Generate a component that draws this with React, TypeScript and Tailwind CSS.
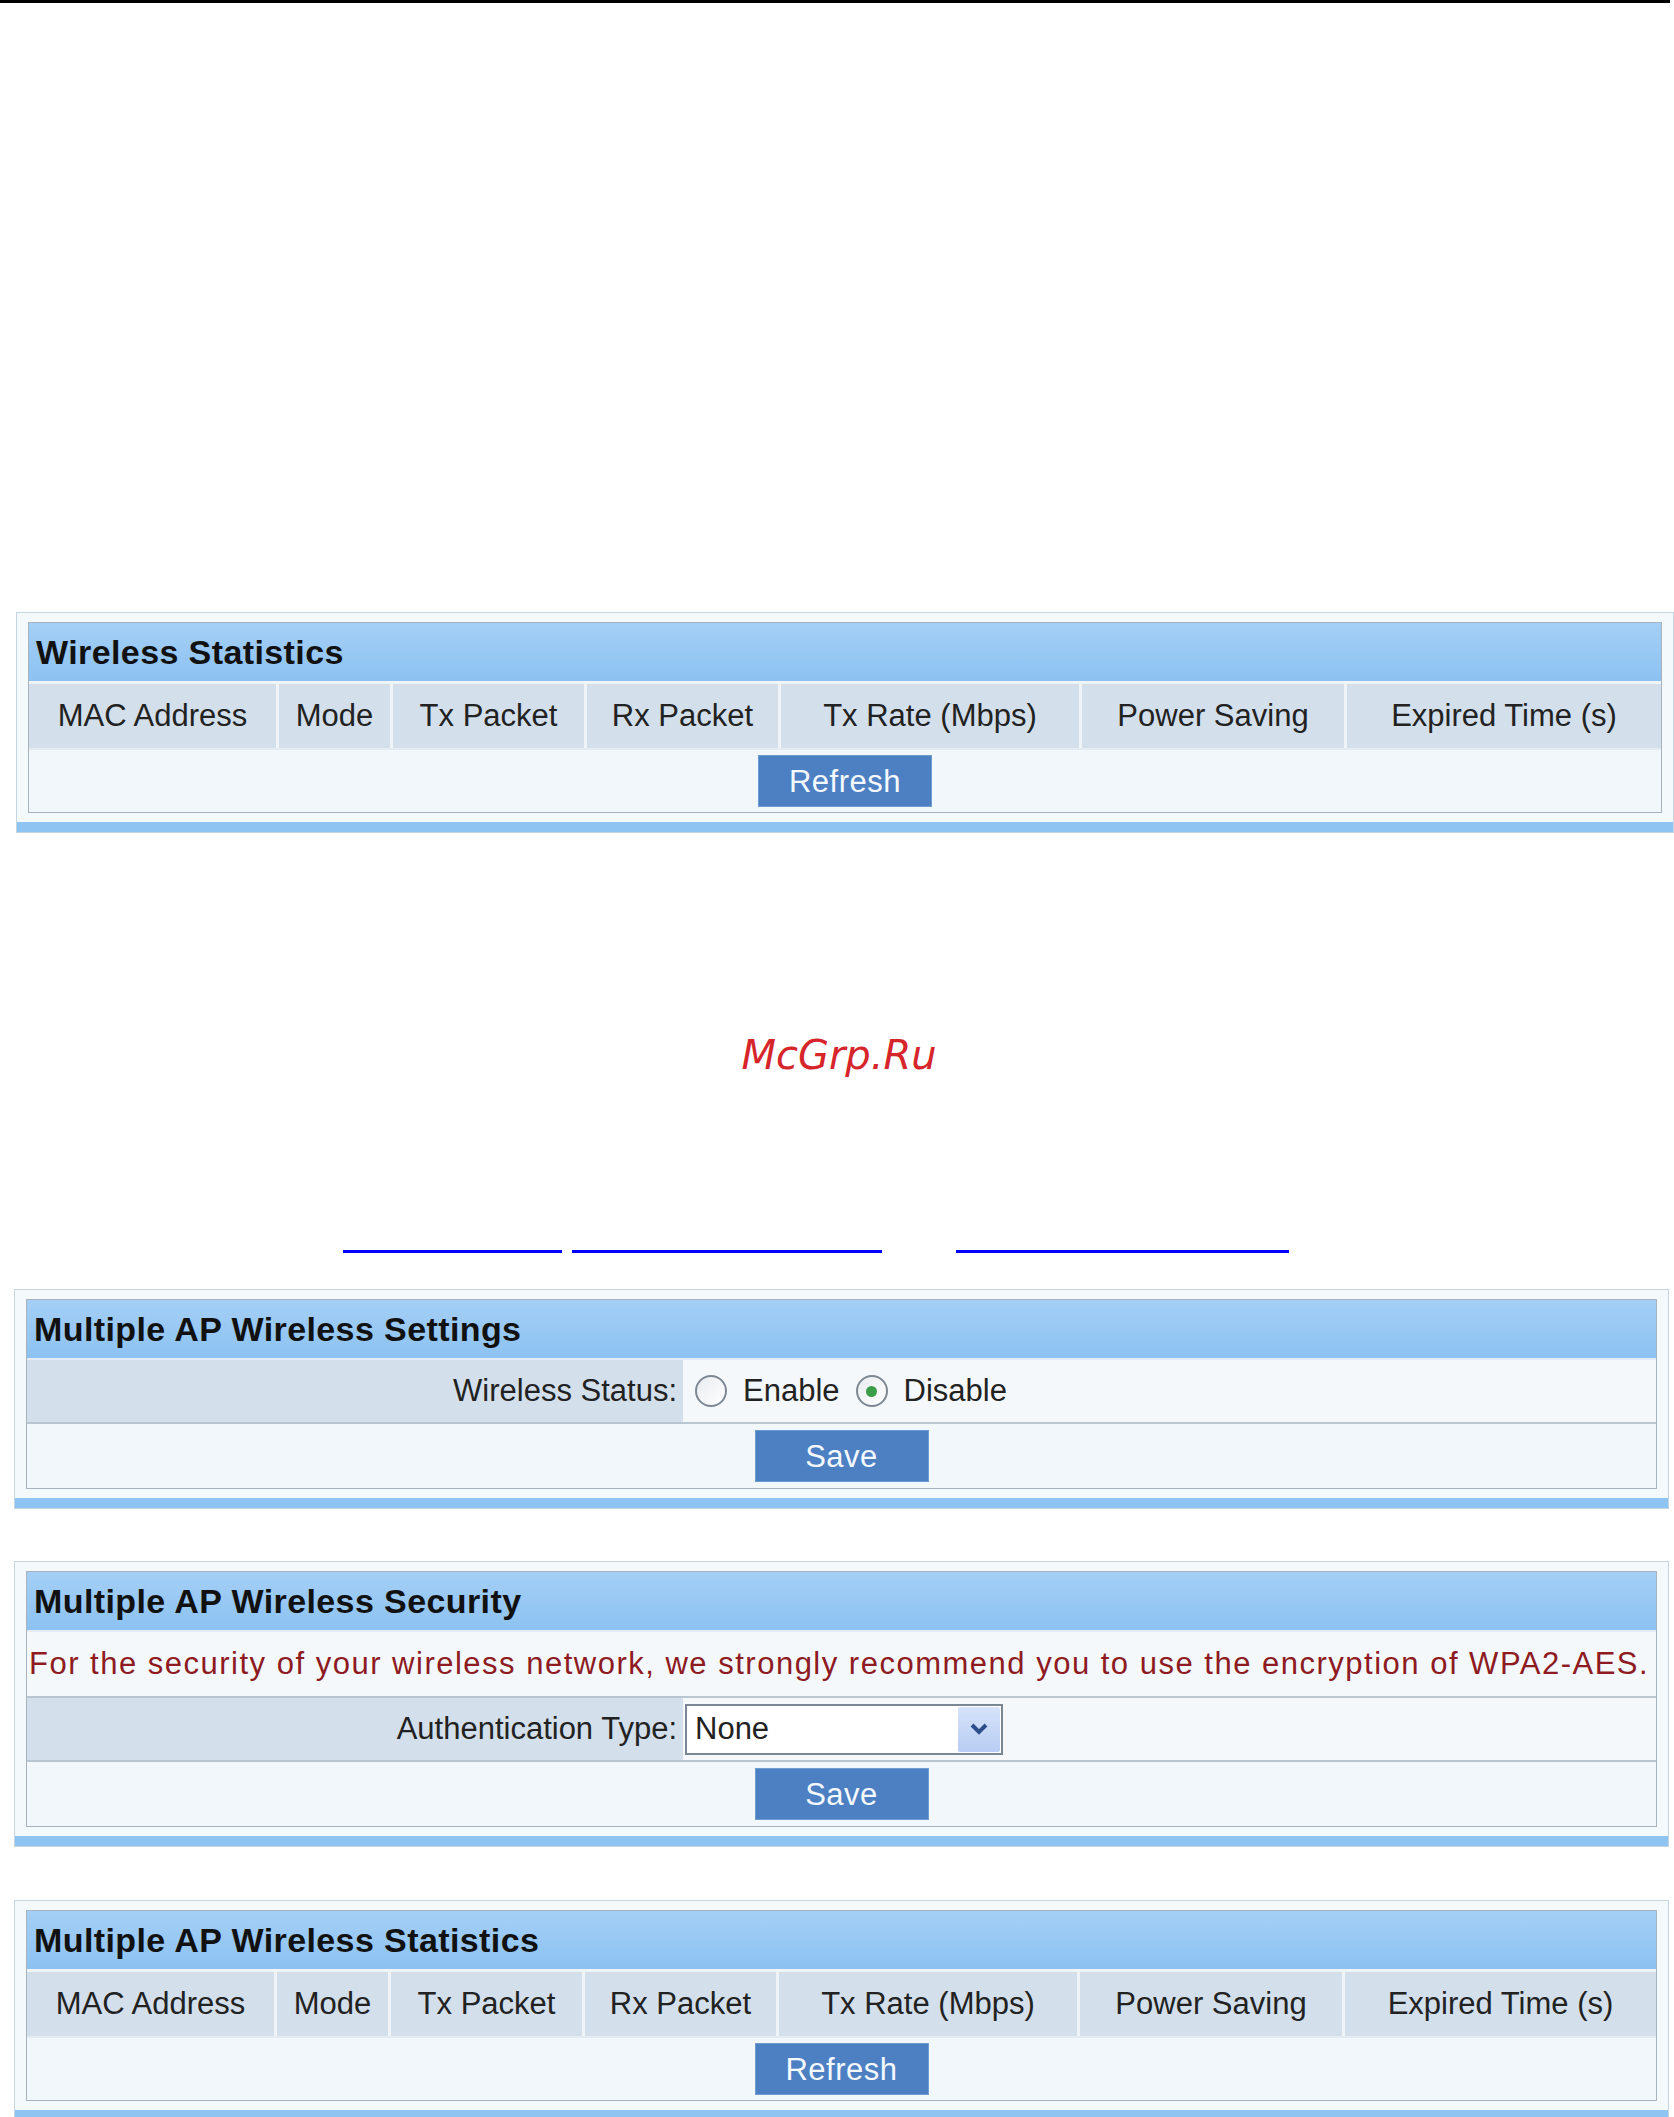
import React from "react";

const font = { fontFamily: '"Liberation Sans", Arial, sans-serif' };

const statCols = [
  "MAC Address",
  "Mode",
  "Tx Packet",
  "Rx Packet",
  "Tx Rate (Mbps)",
  "Power Saving",
  "Expired Time (s)",
];

function Panel({ title, children, wide }: { title: string; children: React.ReactNode; wide?: boolean }) {
  return (
    <div className={`border border-[#c6d4df] bg-[#f4f9fc] ${wide ? "ml-[16px] mr-0" : "ml-[14px] mr-[5px]"}`}>
      <div className="px-[11px] pt-[9px] pb-[9px]">
        <div className="border border-[#a8b3bd] bg-[#eef4f8]">
          <div className="h-[58px] flex items-center pl-[7px] bg-gradient-to-b from-[#a4cff6] to-[#8cc2f1] text-[34px] font-bold text-[#111] tracking-[0.4px]">
            {title}
          </div>
          {children}
        </div>
      </div>
      <div className="h-[10px] bg-[#8ec4f2]" />
    </div>
  );
}

function Button({ label }: { label: string }) {
  return (
    <button className="h-[52px] w-[174px] bg-[#4c80c2] text-[#f4f8ff] text-[31px] leading-none border border-[#6e9bd2] tracking-[0.5px]">
      {label}
    </button>
  );
}

function StatsBody() {
  return (
    <>
      <div className="grid grid-cols-[247px_111px_191px_191px_298px_262px_1fr] gap-x-[3px] bg-[#eef4f8] pt-[3px]">
        {statCols.map((c) => (
          <div key={c} className="h-[64px] bg-[#d3e0ec] flex items-center justify-center text-[31px] text-[#222]">
            {c}
          </div>
        ))}
      </div>
      <div className="h-[64px] bg-[#f1f7fb] flex items-center justify-center border-t-2 border-[#e3ecf3]">
        <Button label="Refresh" />
      </div>
    </>
  );
}

function Radio({ checked }: { checked?: boolean }) {
  return (
    <span className="w-[32px] h-[32px] rounded-full border-2 border-[#7d8893] bg-gradient-to-br from-[#e8ecef] to-white flex items-center justify-center">
      {checked && <span className="w-[11px] h-[11px] rounded-full bg-[#3b9e49]" />}
    </span>
  );
}

export default function App() {
  return (
    <div className="w-[1674px] bg-white pb-[40px]" style={font}>
      <div className="h-[3px] w-[1670px] bg-black" />

      <div className="mt-[609px]">
        <Panel title="Wireless Statistics" wide>
          <StatsBody />
        </Panel>
      </div>

      <div className="mt-[192px] flex justify-center pl-[4px]">
        <span className="text-[40px] italic text-[#d6262b]" style={{ fontFamily: '"DejaVu Sans", sans-serif' }}>
          McGrp.Ru
        </span>
      </div>

      {/* link underlines */}
      <div className="mt-[165px] flex h-[3px]">
        <div className="ml-[343px] w-[219px] bg-[#0000ff]" />
        <div className="ml-[10px] w-[310px] bg-[#0000ff]" />
        <div className="ml-[74px] w-[333px] bg-[#0000ff]" />
      </div>

      <div className="mt-[36px]">
        <Panel title="Multiple AP Wireless Settings">
          <div className="flex h-[64px] border-t-2 border-[#e3ecf3]">
            <div className="w-[656px] bg-[#d3e0ec] flex items-center justify-end pr-[6px] text-[31px] text-[#222]">
              Wireless Status:
            </div>
            <div className="flex-1 bg-[#f4f8fb] flex items-center pl-[12px] gap-[16px] text-[31px] text-[#222]">
              <Radio />
              <span>Enable</span>
              <Radio checked />
              <span>Disable</span>
            </div>
          </div>
          <div className="h-[66px] bg-[#f1f7fb] flex items-center justify-center border-t-2 border-[#b9c5cf]">
            <Button label="Save" />
          </div>
        </Panel>
      </div>

      <div className="mt-[52px]">
        <Panel title="Multiple AP Wireless Security">
          <div className="h-[66px] bg-[#f4f8fb] flex items-center pl-[2px] text-[31px] text-[#8e1a22] whitespace-nowrap border-t-2 border-[#e3ecf3] tracking-[1.5px]">
            For the security of your wireless network, we strongly recommend you to use the encryption of WPA2-AES.
          </div>
          <div className="flex h-[64px] border-t-2 border-[#b9c5cf]">
            <div className="w-[656px] bg-[#d3e0ec] flex items-center justify-end pr-[6px] text-[31px] text-[#222]">
              Authentication Type:
            </div>
            <div className="flex-1 bg-[#f4f8fb] flex items-center pl-[2px]">
              <div className="w-[318px] h-[51px] border-2 border-[#7b8794] bg-white flex items-center">
                <span className="flex-1 pl-[8px] text-[31px] text-[#222]">None</span>
                <span className="w-[42px] h-[45px] mr-[1px] bg-gradient-to-b from-[#d6e3fa] to-[#b8cdf3] flex items-center justify-center rounded-[2px]">
                  <svg width="18" height="12" viewBox="0 0 18 12">
                    <path d="M2 2 L9 9 L16 2" fill="none" stroke="#2c4f8c" strokeWidth="4" />
                  </svg>
                </span>
              </div>
            </div>
          </div>
          <div className="h-[66px] bg-[#f1f7fb] flex items-center justify-center border-t-2 border-[#b9c5cf]">
            <Button label="Save" />
          </div>
        </Panel>
      </div>

      <div className="mt-[53px]">
        <Panel title="Multiple AP Wireless Statistics">
          <StatsBody />
        </Panel>
      </div>
    </div>
  );
}
